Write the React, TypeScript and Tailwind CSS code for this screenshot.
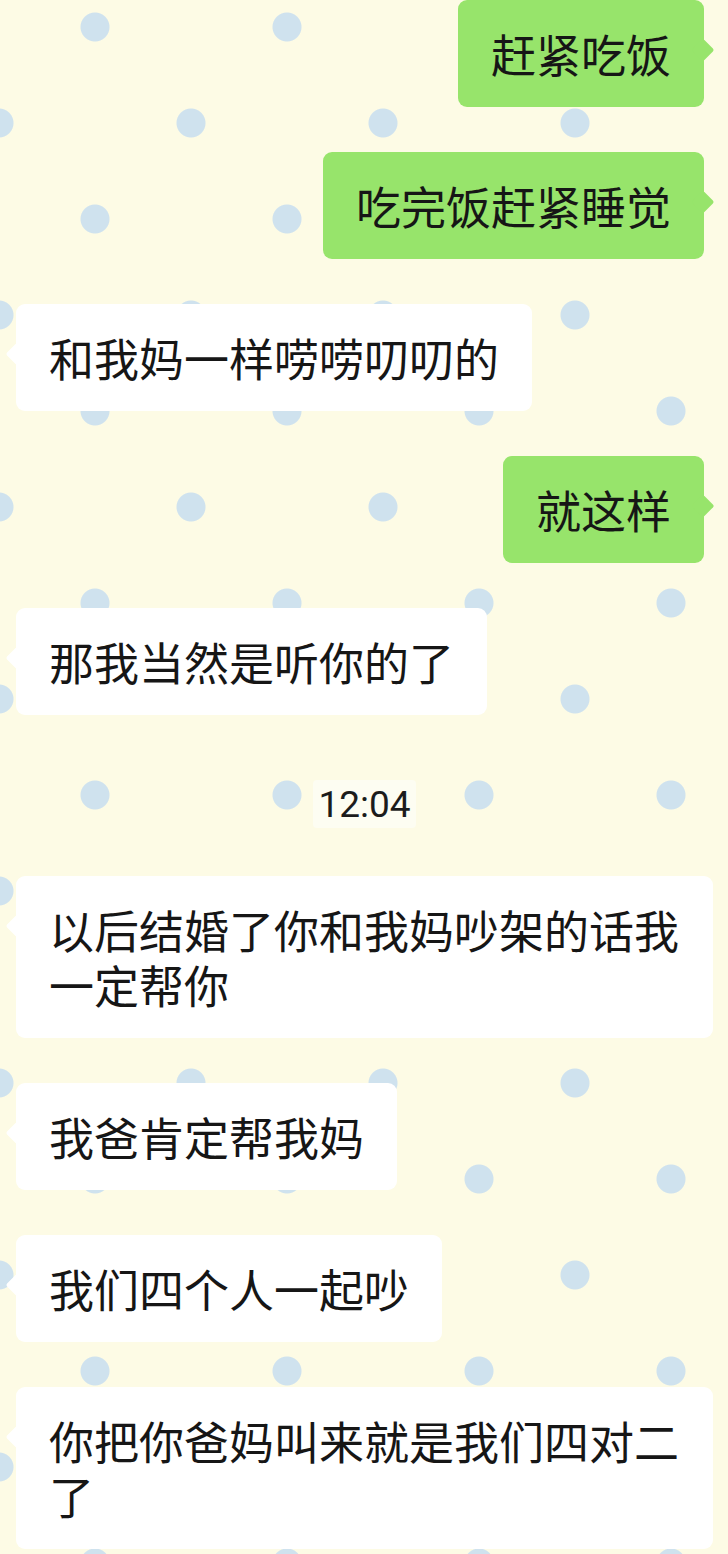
import React from "react";

type Msg =
  | { kind: "me"; text: string }
  | { kind: "them"; text: string }
  | { kind: "time"; text: string };

const messages: Msg[] = [
  { kind: "me", text: "赶紧吃饭" },
  { kind: "me", text: "吃完饭赶紧睡觉" },
  { kind: "them", text: "和我妈一样唠唠叨叨的" },
  { kind: "me", text: "就这样" },
  { kind: "them", text: "那我当然是听你的了" },
  { kind: "time", text: "12:04" },
  { kind: "them", text: "以后结婚了你和我妈吵架的话我一定帮你" },
  { kind: "them", text: "我爸肯定帮我妈" },
  { kind: "them", text: "我们四个人一起吵" },
  { kind: "them", text: "你把你爸妈叫来就是我们四对二了" },
];

function Bubble({ text, mine }: { text: string; mine: boolean }) {
  return (
    <div className={mine ? "flex justify-end pr-[9px]" : "flex justify-start"}>
      <div
        className={
          "relative max-w-[698px] rounded-[9px] px-[33px] py-[26px] text-[45px] leading-[55px] text-[#161616] " +
          (mine ? "bg-[#97e46b]" : "bg-white")
        }
      >
        <span
          className={
            "absolute top-[42px] h-[16px] w-[16px] rotate-45 rounded-[2px] " +
            (mine ? "right-[-7px] bg-[#97e46b]" : "left-[-7px] bg-white")
          }
        />
        <span className="relative">{text}</span>
      </div>
    </div>
  );
}

export default function App() {
  return (
    <div
      className="h-[1554px] w-full overflow-hidden bg-[#fdfbe5] bg-[radial-gradient(circle_at_48px_48px,#cfe2ee_14px,transparent_15px),radial-gradient(circle_at_144px_144px,#cfe2ee_14px,transparent_15px)] bg-size-[192px_192px] bg-position-[47px_-21px]"
      style={{ fontFamily: '"Noto Sans CJK SC", "Noto Sans", sans-serif' }}
    >
      <div className="flex flex-col gap-[45px] pl-[16px] pr-[15px]">
        {messages.map((m, i) =>
          m.kind === "time" ? (
            <div key={i} className="mt-[20px] mb-[3px] flex justify-center">
              <div className="flex h-[48px] items-center rounded-[4px] bg-[#fdfdf2] px-[5px] font-['Roboto',sans-serif] text-[37px] leading-none text-[#1c1c1c]">
                {m.text}
              </div>
            </div>
          ) : (
            <Bubble key={i} text={m.text} mine={m.kind === "me"} />
          )
        )}
      </div>
    </div>
  );
}
